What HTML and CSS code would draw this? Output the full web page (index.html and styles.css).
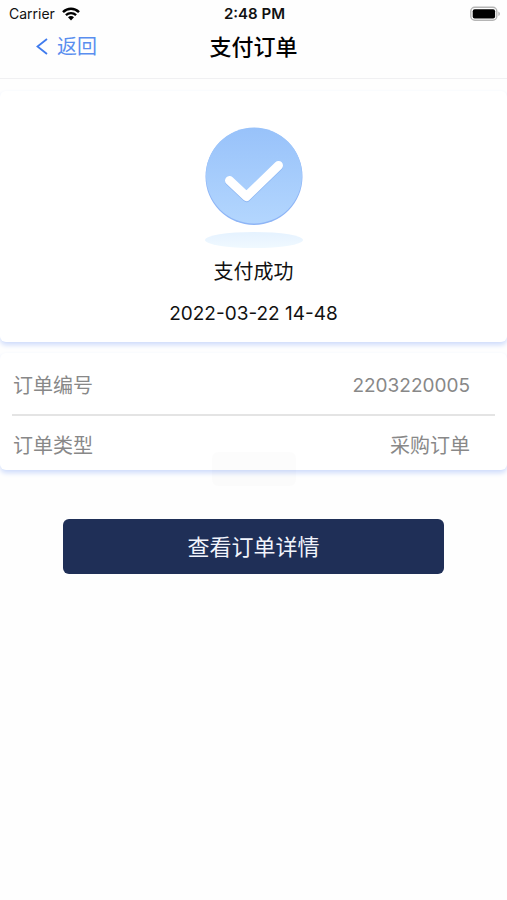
FILE: index.html
```html
<!DOCTYPE html>
<html lang="zh-CN">
<head>
<meta charset="utf-8">
<meta name="viewport" content="width=device-width, initial-scale=1">
<title>支付订单</title>
<link rel="stylesheet" href="styles.css">
</head>
<body>
<div class="status">
  <div class="carrier">
    <span>Carrier</span>
    <svg width="18" height="14" viewBox="0 0 18 14" aria-hidden="true">
      <path d="M1 5.2C5.6.7 12.400.7 17 5.200" fill="none" stroke="#000" stroke-width="2.500"/>
      <path d="M3.900 8.200C6.800 5.400 11.200 5.400 14.100 8.200" fill="none" stroke="#000" stroke-width="2.300"/>
      <path d="M6 10.300C7.700 8.700 10.300 8.700 12 10.300L9 13.400Z"/>
    </svg>
  </div>
  <time class="clock">2:48 PM</time>
  <svg class="battery" width="30" height="16" viewBox="0 0 30 16" aria-hidden="true">
    <rect x=".8" y="1.300" width="26" height="13" rx="4" fill="#fff" stroke="#b5b5b5" stroke-width="1.400"/>
    <rect x="2.700" y="3.200" width="22.400" height="9.200" rx="2"/>
    <path d="M28.300 5.500Q30 6.200 30 7.800T28.300 10.100Z" fill="#b5b5b5"/>
  </svg>
</div>
<header class="nav">
  <a class="back" href="#">
    <svg width="12" height="18" viewBox="0 0 12 18" aria-hidden="true"><path d="M11 1L1.500 8.500L11 16" fill="none" stroke="#3f7bee" stroke-width="1.800"/></svg>
    <span>返回</span>
  </a>
  <h1 class="title">支付订单</h1>
</header>
<main>
  <section class="card result">
    <svg width="100" height="122" viewBox="0 0 100 122" aria-hidden="true">
      <defs>
        <linearGradient id="disc" x1="0" y1="0" x2="0" y2="1"><stop offset="0" stop-color="#98c2fa"/><stop offset="1" stop-color="#b3d6fe"/></linearGradient>
        <linearGradient id="base" x1="0" y1="0" x2="0" y2="1"><stop offset="0" stop-color="#e5f2ff"/><stop offset="1" stop-color="#f0f9ff"/></linearGradient>
      </defs>
      <ellipse cx="50" cy="113" rx="49" ry="8" fill="url(#base)"/>
      <circle cx="50" cy="49.500" r="48.500" fill="#8eb5f6"/>
      <circle cx="50" cy="48.500" r="48" fill="url(#disc)"/>
      <path d="M25.500 54.500L42.500 70.500L74.500 39.500" fill="none" stroke="#8fb8f3" stroke-width="9" stroke-linecap="round" stroke-linejoin="round"/>
      <path d="M25.500 53.500L42.500 69.500L74.500 38.500" fill="none" stroke="#fff" stroke-width="9" stroke-linecap="round" stroke-linejoin="round"/>
    </svg>
    <p class="message">支付成功</p>
    <p class="date">2022-03-22 14-48</p>
  </section>
  <dl class="card details">
    <div class="row"><dt>订单编号</dt><dd class="number">2203220005</dd></div>
    <div class="row"><dt>订单类型</dt><dd>采购订单</dd></div>
    <div class="toast" aria-hidden="true"></div>
  </dl>
  <button class="action" type="button">查看订单详情</button>
</main>
</body>
</html>
```
FILE: styles.css
```css
* {
  box-sizing: border-box;
}

body {
  margin: 0;
  min-height: 100vh;
  background: #fefefe;
  color: #111;
  font-family: Inter, "Noto Sans CJK SC", sans-serif;
  font-size: 20px;
  line-height: 28px;
}

h1, p, dl, dd {
  margin: 0;
}

svg {
  display: block;
}

.status {
  display: grid;
  grid-template-columns: 1fr auto 1fr;
  align-items: center;
  height: 28px;
  padding: 0 7px 0 9px;
  font-size: 14px;
}

.carrier {
  display: flex;
  align-items: center;
  gap: 7px;
}

.clock {
  font-size: 15px;
  font-weight: 600;
}

.battery {
  justify-self: end;
}

.nav {
  display: grid;
  grid-template-columns: 1fr auto 1fr;
  align-items: center;
  padding: 5px 36px 17px;
  border-bottom: 1px solid #f0f0f2;
}

.back {
  display: flex;
  align-items: center;
  gap: 9px;
  color: #5a8eef;
  text-decoration: none;
}

.title {
  font-size: 22px;
  font-weight: 500;
  line-height: 28px;
  color: #000;
}

.card {
  background: #fff;
  border-radius: 6px;
  box-shadow: 0 3px 5px #cfdcfb;
}

.result {
  display: flex;
  flex-direction: column;
  align-items: center;
  margin-top: 12px;
  padding: 36px 12px 14px;
}

.message {
  margin-top: 9px;
}

.date {
  margin-top: 14px;
}

.date,
.number {
  font-size: 19px;
}

.details {
  position: relative;
  margin-top: 11px;
  padding: 0 12px;
  color: #888;
}

.row {
  display: flex;
  justify-content: space-between;
  align-items: center;
  height: 54px;
  padding: 5px 25px 0 1px;
}

.row:first-child {
  height: 63px;
  border-bottom: 2px solid #e4e4e4;
}

.toast {
  position: absolute;
  left: 50%;
  top: 100%;
  width: 84px;
  height: 34px;
  margin: -18px 0 0 -42px;
  border-radius: 6px;
  background: rgba(0, 0, 0, 0.012);
}

.action {
  display: block;
  width: 75%;
  height: 55px;
  margin: 49px auto 0;
  border: 0;
  border-radius: 6px;
  background: #1f2f57;
  color: #f1f4fc;
  font: inherit;
  font-size: 22px;
}
```
